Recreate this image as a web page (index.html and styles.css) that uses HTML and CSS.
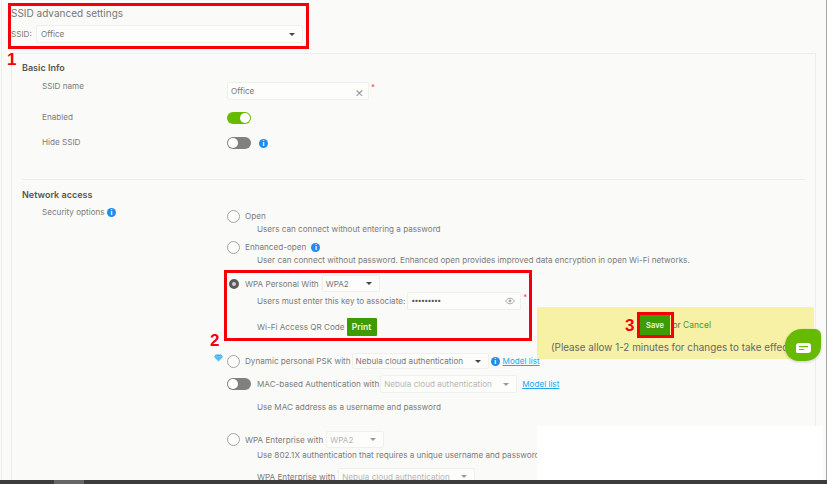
FILE: index.html
```html
<!DOCTYPE html>
<html lang="en">
  <head>
    <meta charset="UTF-8" />
    <title>SSID advanced settings</title>
    <link rel="stylesheet" href="styles.css">
  </head>
  <body>
    <div class="shell">
      <h1 class="page_title">SSID advanced settings</h1>
      <div class="ssid_row">
        <span class="ssid_label">SSID:</span>
        <div class="select select_ssid">Office<i class="caret"></i></div>
      </div>

      <div class="panel">
        <h2 class="section_title">Basic Info</h2>
        <div class="form_row first_row">
          <label class="form_label">SSID name</label>
          <div class="input input_name">Office<span class="clear">&times;</span></div>
          <span class="req">*</span>
        </div>
        <div class="form_row enabled_row">
          <label class="form_label">Enabled</label>
          <span class="toggle on"></span>
        </div>
        <div class="form_row hide_row">
          <label class="form_label">Hide SSID</label>
          <span class="toggle"></span>
          <span class="info hide_info">i</span>
        </div>

        <hr class="divider" />

        <h2 class="section_title">Network access</h2>
        <div class="form_row security_row">
          <label class="form_label">Security options <span class="info">i</span></label>
          <div class="options">
            <div class="opt"><span class="radio"></span>Open</div>
            <div class="sub sub_open">Users can connect without entering a password</div>
            <div class="opt opt_enhanced"><span class="radio"></span>Enhanced-open <span class="info enh_info">i</span></div>
            <div class="sub sub_open">User can connect without password. Enhanced open provides improved data encryption in open Wi-Fi networks.</div>

            <div class="opt opt_wpa">
              <span class="radio checked"></span>WPA Personal With
              <div class="select select_wpa">WPA2<i class="caret"></i></div>
            </div>
            <div class="sub sub_key">
              Users must enter this key to associate:
              <div class="input input_key">&bull;&bull;&bull;&bull;&bull;&bull;&bull;&bull;&bull;
                <svg class="eye" viewBox="0 0 16 12" width="10" height="8">
                  <path d="M1 6c2-3 4.500-4.500 7-4.500S13 3 15 6c-2 3-4.500 4.500-7 4.500S3 9 1 6z" fill="none" stroke="#a9a9a9" stroke-width="1.600" />
                  <circle cx="8" cy="6" r="2.300" fill="#a9a9a9" />
                </svg>
              </div>
              <span class="req key_req">*</span>
            </div>
            <div class="sub sub_qr">Wi-Fi Access QR Code <button class="btn_print">Print</button></div>

            <div class="opt opt_dynamic">
              <span class="radio"></span>Dynamic personal PSK with
              <div class="select select_cloud">Nebula cloud authentication<i class="caret"></i></div>
              <span class="info">i</span>
              <a class="link">Model list</a>
            </div>
            <div class="opt opt_mac">
              <span class="toggle mac_toggle"></span>MAC-based Authentication with
              <div class="select select_cloud disabled">Nebula cloud authentication<i class="caret"></i></div>
              <a class="link">Model list</a>
            </div>
            <div class="sub sub_mac">Use MAC address as a username and password</div>

            <div class="opt opt_ent">
              <span class="radio"></span>WPA Enterprise with
              <div class="select select_ent disabled">WPA2<i class="caret"></i></div>
            </div>
            <div class="sub sub_8021x">Use 802.1X authentication that requires a unique username and password</div>
            <div class="sub sub_ent">WPA Enterprise with
              <div class="select select_cloud disabled">Nebula cloud authentication<i class="caret"></i></div>
            </div>
          </div>
        </div>
      </div>
    </div>

    <div class="scrollbar"><div class="thumb"></div></div>

    <!-- things lying over the page -->
    <svg class="diamond" viewBox="0 0 10 8" width="9" height="8">
      <path d="M2 0h6l2 2.500L5 8 0 2.500z" fill="#35b4f2" />
      <path d="M0 2.500h10M3 2.500 5 8l2-5.500" fill="none" stroke="#9fe0fb" stroke-width=".6" />
    </svg>

    <div class="save_bar">
      <div class="save_line"><button class="btn_save">Save</button> or <a class="cancel">Cancel</a></div>
      <p class="save_note">(Please allow 1-2 minutes for changes to take effect)</p>
    </div>
    <div class="white_block"></div>
    <div class="chat">
      <svg viewBox="0 0 15 10" width="15" height="10">
        <path d="M3 0h9a3 3 0 0 1 3 3v4a3 3 0 0 1-3 3H1L0 9V3a3 3 0 0 1 3-3z" fill="#fff" />
        <path d="M3 3.700h9M3 6.500h5" stroke="#66bb00" stroke-width="1.200" />
      </svg>
    </div>

    <div class="mark mark1"></div>
    <div class="mark mark2"></div>
    <div class="mark mark3"></div>
    <span class="num num1">1</span>
    <span class="num num2">2</span>
    <span class="num num3">3</span>
  </body>
</html>
```

FILE: styles.css
```css
html {
  top: 0;
}
body {
  margin: 0;
  width: 827px;
  height: 484px;
  overflow: hidden;
  background: #fafbf8;
  font-family: "Inter", "Noto Sans", sans-serif;
  font-size: 8.15px;
  color: #7a7a7a;
  position: relative;
}
.shell {
  height: 480px;
  box-sizing: border-box;
  overflow: hidden;
  margin-left: 1px;
  border-left: 1px solid #eceeeb;
  border-right: 1px solid #a8a8a8;
  padding: 7px 10px 0 9px;
}
.page_title {
  margin: 0;
  font-size: 10px;
  line-height: 12px;
  font-weight: 400;
  color: #777;
}
.ssid_row {
  display: flex;
  align-items: center;
  margin-top: 6px;
}
.ssid_label {
  width: 25px;
}
.select {
  display: flex;
  align-items: center;
  justify-content: space-between;
  box-sizing: border-box;
  height: 17px;
  padding: 0 7px 0 3px;
  background: #fdfdfc;
  border: 1px solid #eff0ee;
  border-radius: 2px;
  color: #777;
}
.select_ssid {
  width: 267px;
  height: 18px;
  padding-left: 4px;
}
.caret {
  width: 0;
  height: 0;
  border-left: 3px solid transparent;
  border-right: 3px solid transparent;
  border-top: 3px solid #444;
}
.panel {
  margin-top: 10px;
  padding: 8px 10px 0;
  border: 1px solid #eceeeb;
  border-bottom: none;
}
.section_title {
  margin: 0;
  font-size: 9px;
  line-height: 12px;
  font-weight: 600;
  color: #555;
}
.form_row {
  display: flex;
  align-items: flex-start;
}
.form_label {
  width: 185px;
  padding-left: 20px;
  box-sizing: content-box;
  line-height: 10px;
  flex: none;
}
.first_row {
  margin-top: 8px;
}
.first_row .form_label {
  margin-top: -1px;
}
.enabled_row {
  margin-top: 12px;
}
.hide_row {
  margin-top: 13px;
}
.input {
  display: flex;
  align-items: center;
  justify-content: space-between;
  box-sizing: border-box;
  height: 18px;
  padding: 0 4px 0 3px;
  background: #fdfdfc;
  border: 1px solid #eff0ee;
  border-radius: 2px;
  color: #777;
}
.input_name {
  width: 142px;
}
.clear {
  font-size: 14px;
  font-weight: 300;
  color: #8a8a8a;
}
.req {
  color: #e8505b;
  font-size: 8px;
  line-height: 10px;
  margin-left: 2px;
}
.toggle {
  display: inline-block;
  position: relative;
  flex: none;
  width: 24px;
  height: 12px;
  border-radius: 6px;
  background: #808080;
}
.toggle::after {
  content: "";
  position: absolute;
  left: 1px;
  top: 1px;
  width: 10px;
  height: 10px;
  border-radius: 50%;
  background: #fff;
}
.toggle.on {
  background: #66bb00;
}
.toggle.on::after {
  left: 13px;
}
.info {
  display: inline-block;
  width: 9px;
  height: 9px;
  border-radius: 50%;
  background: #1c8ef0;
  color: #fff;
  font-size: 7px;
  font-weight: 700;
  line-height: 9px;
  text-align: center;
  flex: none;
}
.hide_info {
  margin: 2px 0 0 8px;
}
.divider {
  margin: 30px 0 9px;
  border: none;
  border-top: 1px solid #eceeeb;
}
.security_row {
  margin-top: 6px;
}
.options {
  flex: 1;
  min-width: 0;
}
.opt {
  display: flex;
  align-items: center;
  white-space: nowrap;
  height: 18px;
}
.radio {
  flex: none;
  box-sizing: border-box;
  width: 13px;
  height: 13px;
  margin-right: 5px;
  border: 1px solid #a6a6a6;
  border-radius: 50%;
  background: #fdfdfc;
}
.radio.checked {
  width: 10px;
  height: 10px;
  margin: 0 6px 0 2px;
  border: 3px solid #5a5a5a;
  background: #cfcfcf;
}
.sub {
  display: flex;
  align-items: center;
  margin-left: 30px;
  white-space: nowrap;
  line-height: 14px;
}
.sub_open {
  margin-top: -3px;
}
.opt_enhanced {
  margin-top: 2px;
}
.enh_info {
  margin-left: 5px;
}
.opt_wpa {
  margin-top: 8px;
  height: 17px;
}
.select_wpa {
  width: 58px;
  margin-left: 3px;
}
.sub_key {
  height: 18px;
}
.input_key {
  width: 114px;
  margin-left: 2px;
  color: #555;
  font-size: 7px;
  letter-spacing: -0.7px;
}
.eye {
  margin-right: 1px;
}
.key_req {
  align-self: flex-start;
}
.sub_qr {
  height: 18px;
  margin-top: 8px;
}
.btn_print {
  height: 18px;
  width: 30px;
  margin-left: 2px;
  padding: 0;
  border: none;
  border-radius: 1px;
  background: #3f9c00;
  color: #eef5e4;
  font: 600 8.5px "Inter", sans-serif;
}
.opt_dynamic {
  margin-top: 17px;
  height: 16px;
}
.select_cloud {
  width: 137px;
  margin: 0 3px;
  flex: none;
}
.opt_dynamic .select {
  height: 16px;
  margin: 0 2px 0 1px;
}
.opt_mac {
  margin-top: 6px;
}
.opt_mac .select {
  height: 18px;
  margin: 0 2px 0 1px;
}
.mac_toggle {
  margin-right: 6px;
}
.disabled {
  color: #b5b5b5;
}
.disabled .caret {
  border-top-color: #999;
}
.link {
  margin-left: 3px;
  color: #23a7ee;
  text-decoration: underline;
}
.sub_mac {
  margin-top: 7px;
}
.opt_ent {
  margin-top: 17px;
  height: 17px;
}
.select_ent {
  width: 58px;
  margin-left: 3px;
}
.sub_ent {
  margin-top: 6px;
  height: 17px;
}
.scrollbar {
  height: 4px;
  background: #3c3c3c;
}
.thumb {
  width: 30px;
  height: 4px;
  margin-left: 54px;
  background: #666;
}

/* overlays */
.diamond {
  position: absolute;
  left: 214px;
  top: 354px;
}
.save_bar {
  position: absolute;
  left: 537px;
  top: 307px;
  width: 277px;
  height: 52px;
  overflow: hidden;
  background: #f7f1a5;
  border-radius: 2px;
  color: #666;
  font-size: 8.5px;
}
.save_line {
  display: flex;
  align-items: center;
  margin: 8px 0 0 103px;
  height: 20px;
  white-space: pre;
}
.btn_save {
  width: 30px;
  height: 20px;
  padding: 0;
  border: none;
  background: #3f9c00;
  color: #eef5e4;
  font: 600 7.5px "Inter", sans-serif;
}
.cancel {
  color: #4a9a1a;
}
.save_note {
  margin: 6px 0 0 14px;
  font-size: 9.85px;
  line-height: 12px;
  white-space: nowrap;
}
.white_block {
  position: absolute;
  left: 537px;
  top: 426px;
  width: 286px;
  height: 54px;
  background: #fff;
}
.chat {
  position: absolute;
  left: 785px;
  top: 329px;
  width: 36px;
  height: 32px;
  box-sizing: border-box;
  padding-top: 6px;
  display: flex;
  align-items: center;
  justify-content: center;
  background: #66bb00;
  border-radius: 17px 6px 15px 14px;
  box-shadow: 0 1px 3px rgba(0, 0, 0, 0.2);
}
.mark {
  position: absolute;
  box-sizing: border-box;
  border: 3px solid #f40009;
}
.mark1 {
  left: 8px;
  top: 3px;
  width: 301px;
  height: 46px;
}
.mark2 {
  left: 224px;
  top: 270px;
  width: 308px;
  height: 71px;
}
.mark3 {
  left: 637px;
  top: 312px;
  width: 37px;
  height: 26px;
}
.num {
  position: absolute;
  color: #f40009;
  font: 700 17px/17px "Liberation Sans", sans-serif;
}
.num1 {
  left: 7px;
  top: 51px;
}
.num2 {
  left: 210px;
  top: 332px;
}
.num3 {
  left: 625px;
  top: 317px;
}
```
